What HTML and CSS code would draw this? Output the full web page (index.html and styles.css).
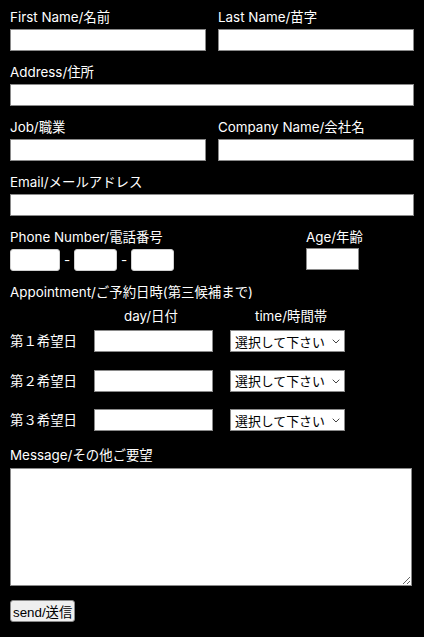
FILE: index.html
```html
<!DOCTYPE html>
<html lang="ja">
<head>
<meta charset="utf-8">
<title>Contact</title>
<link rel="stylesheet" href="styles.css">
</head>
<body>
<form class="form">
  <div class="two">
    <div class="field">
      <label class="label">First Name/名前</label>
      <input class="input" type="text">
    </div>
    <div class="field">
      <label class="label">Last Name/苗字</label>
      <input class="input" type="text">
    </div>
  </div>
  <div class="field">
    <label class="label">Address/住所</label>
    <input class="input" type="text">
  </div>
  <div class="two">
    <div class="field">
      <label class="label">Job/職業</label>
      <input class="input" type="text">
    </div>
    <div class="field">
      <label class="label">Company Name/会社名</label>
      <input class="input" type="text">
    </div>
  </div>
  <div class="field">
    <label class="label">Email/メールアドレス</label>
    <input class="input" type="email">
  </div>
  <div class="phone-row">
    <div class="field">
      <label class="label">Phone Number/電話番号</label>
      <div class="phone">
        <input class="input tel tel-a" type="tel">
        <span class="dash">-</span>
        <input class="input tel tel-b" type="tel">
        <span class="dash">-</span>
        <input class="input tel tel-b" type="tel">
      </div>
    </div>
    <div class="field">
      <label class="label">Age/年齢</label>
      <input class="input age" type="text">
    </div>
  </div>
  <div class="appointment">
    <div class="label appt-title">Appointment/ご予約日時(第三候補まで)</div>
    <div class="appt-head">
      <span></span>
      <span class="head-day">day/日付</span>
      <span class="head-time">time/時間帯</span>
    </div>
    <div class="appt-rows">
      <span class="row-label">第１希望日</span>
      <input class="input date" type="text">
      <div class="select-wrap">
        <select class="select"><option>選択して下さい</option></select>
        <svg class="chev" width="8" height="5" viewBox="0 0 8 5"><path d="M0.7 0.7L4 4L7.3 0.7" fill="none" stroke="#444" stroke-width="1"/></svg>
      </div>
      <span class="row-label">第２希望日</span>
      <input class="input date" type="text">
      <div class="select-wrap">
        <select class="select"><option>選択して下さい</option></select>
        <svg class="chev" width="8" height="5" viewBox="0 0 8 5"><path d="M0.7 0.7L4 4L7.3 0.7" fill="none" stroke="#444" stroke-width="1"/></svg>
      </div>
      <span class="row-label">第３希望日</span>
      <input class="input date" type="text">
      <div class="select-wrap">
        <select class="select"><option>選択して下さい</option></select>
        <svg class="chev" width="8" height="5" viewBox="0 0 8 5"><path d="M0.7 0.7L4 4L7.3 0.7" fill="none" stroke="#444" stroke-width="1"/></svg>
      </div>
    </div>
  </div>
  <div class="message">
    <label class="label">Message/その他ご要望</label>
    <textarea class="textarea"></textarea>
  </div>
  <button class="send" type="submit">send/送信</button>
</form>
</body>
</html>
```
FILE: styles.css
```css
html, body {
  margin: 0;
  padding: 0;
  background: #000;
}
body {
  color: #fff;
  font-family: Inter, "Noto Sans CJK JP", sans-serif;
  font-size: 13.4px;
}
.form {
  width: 404px;
  padding: 8px 10px 0 10px;
}
.two {
  display: grid;
  grid-template-columns: 196px 196px;
  column-gap: 12px;
}
.field {
  display: flex;
  flex-direction: column;
  margin-bottom: 12px;
}
.label {
  display: block;
  line-height: 18px;
  height: 18px;
  margin-bottom: 3px;
  white-space: nowrap;
}
.input {
  box-sizing: border-box;
  height: 22px;
  margin: 0;
  border: 1px solid #8a8a8a;
  background: #fff;
  border-radius: 0;
  padding: 0 3px;
  font: inherit;
}
.phone-row {
  display: grid;
  grid-template-columns: 296px 53px;
}
.phone {
  display: flex;
  align-items: center;
}
.tel {
  border-radius: 3px;
  border-color: #d0d0d0;
}
.tel-a { width: 50px; }
.tel-b { width: 43px; }
.dash {
  width: 14px;
  text-align: center;
  line-height: 22px;
}
.age {
  width: 53px;
  margin-top: -1px;
}
.appt-title {
  margin-bottom: 6px;
}
.appt-head {
  display: grid;
  grid-template-columns: 84px 136px 115px;
  height: 18px;
  line-height: 18px;
  margin-bottom: 5px;
}
.head-day {
  padding-left: 30px;
}
.head-time {
  padding-left: 25px;
  white-space: nowrap;
}
.appt-rows {
  display: grid;
  grid-template-columns: 84px 119px 132px;
  grid-auto-rows: 22px;
  row-gap: 17.5px;
  align-items: center;
}
.row-label {
  line-height: 22px;
}
.date {
  width: 119px;
}
.select-wrap {
  position: relative;
  margin-left: 17px;
  width: 115px;
  height: 22px;
}
.select {
  -webkit-appearance: none;
  appearance: none;
  display: block;
  box-sizing: border-box;
  width: 115px;
  height: 22px;
  margin: 0;
  border: 1px solid #8a8a8a;
  border-radius: 0;
  background: #fff;
  color: #000;
  font-family: "Noto Sans CJK JP", sans-serif;
  font-size: 12.9px;
  padding: 0 0 0 4px;
}
.chev {
  position: absolute;
  z-index: 2;
  right: 5px;
  top: 9px;
  pointer-events: none;
}
.message {
  margin-top: 15px;
}
.message .label {
  margin-bottom: 4px;
}
.textarea {
  display: block;
  box-sizing: border-box;
  width: 402px;
  height: 118px;
  margin: 0;
  border: 1px solid #8a8a8a;
  background: #fff;
  border-radius: 0;
  font: inherit;
}
.send {
  display: block;
  margin-top: 14px;
  box-sizing: border-box;
  height: 22px;
  padding: 0 2px;
  background: #efefef;
  color: #000;
  border: 1px solid #8a8a8a;
  border-radius: 3px;
  font-family: "Liberation Sans", "Noto Sans CJK JP", sans-serif;
  font-size: 13.33px;
}
```
